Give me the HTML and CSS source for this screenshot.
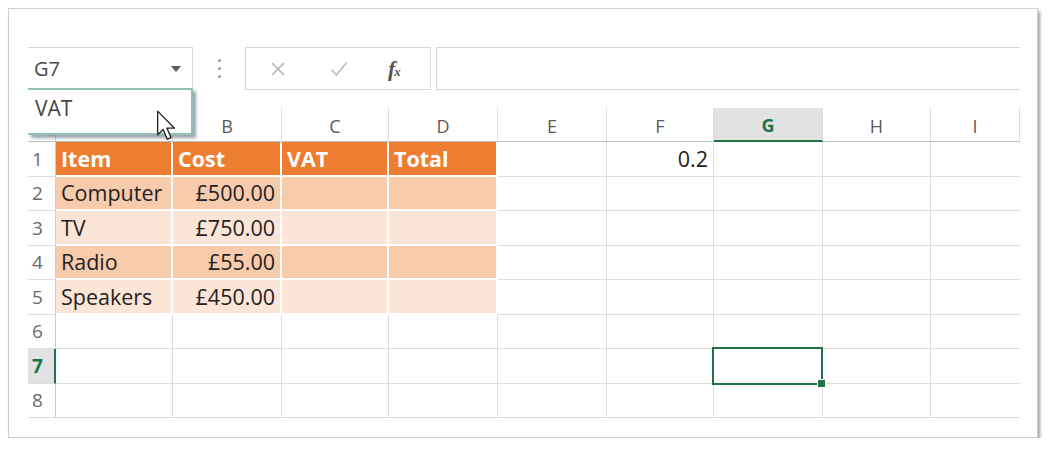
FILE: index.html
```html
<!DOCTYPE html>
<html lang="en">
<head>
<meta charset="utf-8">
<title>Sheet1</title>
<link rel="stylesheet" href="styles.css">
</head>
<body>
<div class="window">
  <div class="formula-bar">
    <div class="name-box">
      <span class="ref">G7</span>
      <svg class="caret" width="10" height="6" viewBox="0 0 10 6"><path d="M0 0H10L5 6Z" fill="#5b5b5b"/></svg>
    </div>
    <div class="grip"><span></span><span></span><span></span></div>
    <div class="fx-buttons">
      <svg width="16" height="16" viewBox="0 0 16 16"><path d="M2 2L14 14M14 2L2 14" stroke="#b4b4b4" stroke-width="1.6" fill="none"/></svg>
      <svg width="18" height="16" viewBox="0 0 18 16"><path d="M1.5 8.5L6.5 14L16.5 1.5" stroke="#bcbcbc" stroke-width="1.6" fill="none"/></svg>
      <span class="fx"><i>f</i><sub>x</sub></span>
    </div>
    <div class="formula-input"></div>
  </div>

  <div class="sheet">
    <div class="hd corner"></div>
    <div class="hd">A</div><div class="hd">B</div><div class="hd">C</div><div class="hd">D</div>
    <div class="hd">E</div><div class="hd">F</div><div class="hd sel">G</div><div class="hd">H</div><div class="hd">I</div>

    <div class="rh">1</div>
    <div class="c th">Item</div><div class="c th">Cost</div><div class="c th">VAT</div><div class="c th">Total</div>
    <div class="c"></div><div class="c num">0.2</div><div class="c"></div><div class="c"></div><div class="c"></div>

    <div class="rh">2</div>
    <div class="c band1">Computer</div><div class="c band1 num">£500.00</div><div class="c band1"></div><div class="c band1"></div>
    <div class="c"></div><div class="c"></div><div class="c"></div><div class="c"></div><div class="c"></div>

    <div class="rh">3</div>
    <div class="c band2">TV</div><div class="c band2 num">£750.00</div><div class="c band2"></div><div class="c band2"></div>
    <div class="c"></div><div class="c"></div><div class="c"></div><div class="c"></div><div class="c"></div>

    <div class="rh">4</div>
    <div class="c band1">Radio</div><div class="c band1 num">£55.00</div><div class="c band1"></div><div class="c band1"></div>
    <div class="c"></div><div class="c"></div><div class="c"></div><div class="c"></div><div class="c"></div>

    <div class="rh">5</div>
    <div class="c band2">Speakers</div><div class="c band2 num">£450.00</div><div class="c band2"></div><div class="c band2"></div>
    <div class="c"></div><div class="c"></div><div class="c"></div><div class="c"></div><div class="c"></div>

    <div class="rh">6</div>
    <div class="c"></div><div class="c"></div><div class="c"></div><div class="c"></div>
    <div class="c"></div><div class="c"></div><div class="c"></div><div class="c"></div><div class="c"></div>

    <div class="rh sel">7</div>
    <div class="c"></div><div class="c"></div><div class="c"></div><div class="c"></div>
    <div class="c"></div><div class="c"></div><div class="c active"></div><div class="c"></div><div class="c"></div>

    <div class="rh">8</div>
    <div class="c"></div><div class="c"></div><div class="c"></div><div class="c"></div>
    <div class="c"></div><div class="c"></div><div class="c"></div><div class="c"></div><div class="c"></div>
  </div>

  <div class="autocomplete">VAT</div>
  <svg class="pointer" width="22" height="34" viewBox="0 0 20 30">
    <path d="M1.5 1.5V23L6.5 18.2L10.2 27L13.6 25.5L10 17H16.8Z" fill="#fff" stroke="#222" stroke-width="1.2" stroke-linejoin="round"/>
  </svg>
</div>
</body>
</html>
```

FILE: styles.css
```css
* {
  box-sizing: border-box;
}

body {
  margin: 0;
  background: #ffffff;
  font-family: "Open Sans", "Noto Sans", sans-serif;
  color: #222;
}

.window {
  position: relative;
  margin: 8px 0 0 8px;
  width: 1030px;
  height: 430px;
  border: 1px solid #cfcfcf;
  background: #fff;
  box-shadow: 2px 3px 3px rgba(0, 0, 0, 0.38);
  padding: 38px 0 0 19px;
}

/* ---------- formula bar ---------- */
.formula-bar {
  display: flex;
  height: 43px;
  width: 992px;
}

.name-box {
  width: 165px;
  border: 1px solid #d6d6d6;
  border-left: none;
  display: flex;
  align-items: center;
  justify-content: space-between;
  padding: 0 11px 0 6px;
}

.name-box .ref {
  font-size: 20px;
  color: #4a4a4a;
}

.grip {
  width: 52px;
  display: flex;
  flex-direction: column;
  align-items: center;
  justify-content: center;
  gap: 5px;
}

.grip span {
  width: 3px;
  height: 3px;
  border-radius: 50%;
  background: #9a9a9a;
}

.fx-buttons {
  width: 186px;
  border: 1px solid #d6d6d6;
  display: flex;
  align-items: center;
  padding: 0 0 0 24px;
  gap: 44px;
}

.fx {
  font-family: "Liberation Serif", serif;
  font-size: 22px;
  font-weight: 700;
  color: #555;
  margin-left: -4px;
  line-height: 1;
}

.fx i {
  font-style: italic;
}

.fx sub {
  font-size: 13px;
  font-style: italic;
  vertical-align: 0;
  margin-left: -1px;
}

.formula-input {
  flex: 1;
  margin-left: 5px;
  border: 1px solid #d6d6d6;
  border-right: none;
}

/* ---------- grid ---------- */
.sheet {
  margin-top: 18px;
  display: grid;
  grid-template-columns: 28px 117px 109px 107px 109px 109px 107px 109px 108px 89px;
  grid-template-rows: 34px repeat(8, 34.5px);
  width: 992px;
}

.hd {
  display: flex;
  align-items: center;
  justify-content: center;
  font-size: 18px;
  color: #595959;
  border-right: 1px solid #dcdcdc;
  border-bottom: 1px solid #bdbdbd;
  padding-top: 2px;
}

.hd:last-child {
  border-right: none;
}

.hd.corner {
  border-right: 1px solid #cfcfcf;
}

.hd.sel {
  background: #e2e2e2;
  color: #217346;
  font-weight: 700;
  border-bottom: 2px solid #217346;
}

.rh {
  display: flex;
  align-items: center;
  padding-left: 4px;
  font-size: 19px;
  color: #6a6a6a;
  border-right: 1px solid #cfcfcf;
  border-bottom: 1px solid #dcdcdc;
}

.rh.sel {
  background: #e2e2e2;
  color: #217346;
  font-weight: 700;
  border-right: 2px solid #217346;
}

.c {
  display: flex;
  align-items: center;
  padding: 0 5px 0 5px;
  font-size: 21.5px;
  color: #222;
  border-right: 1px solid #dcdcdc;
  border-bottom: 1px solid #dcdcdc;
  white-space: nowrap;
}

.c:nth-child(10n + 10) {
  border-right: none;
}

.c.num {
  justify-content: flex-end;
}

/* table style: orange header, banded peach rows */
.c.th {
  background: #ed7d31;
  color: #fff;
  font-weight: 700;
  border-right: 2px solid #fff;
  border-bottom: 2px solid #fff;
}

.c.band1 {
  background: #f8cbad;
  border-right: 2px solid #fff;
  border-bottom: 2px solid #fff;
}

.c.band2 {
  background: #fce4d6;
  border-right: 2px solid #fff;
  border-bottom: 2px solid #fff;
}

.c.active {
  position: relative;
}

.c.active::after {
  content: "";
  position: absolute;
  left: -2px;
  top: -2px;
  right: -1px;
  bottom: -2px;
  border: 2px solid #217346;
}

.c.active::before {
  content: "";
  position: absolute;
  right: -4px;
  bottom: -5px;
  width: 7px;
  height: 7px;
  background: #217346;
  border: 1px solid #fff;
  z-index: 1;
}

/* ---------- name box dropdown list ---------- */
.autocomplete {
  position: absolute;
  left: 19px;
  top: 79px;
  width: 165px;
  height: 47px;
  background: #fff;
  border: 2px solid #8fc2b3;
  border-left: none;
  box-shadow: 3px 3px 3px rgba(70, 90, 110, 0.55);
  font-size: 21px;
  color: #444;
  display: flex;
  align-items: center;
  padding-left: 7px;
  padding-bottom: 7px;
}

.pointer {
  position: absolute;
  left: 147px;
  top: 100px;
}
```
